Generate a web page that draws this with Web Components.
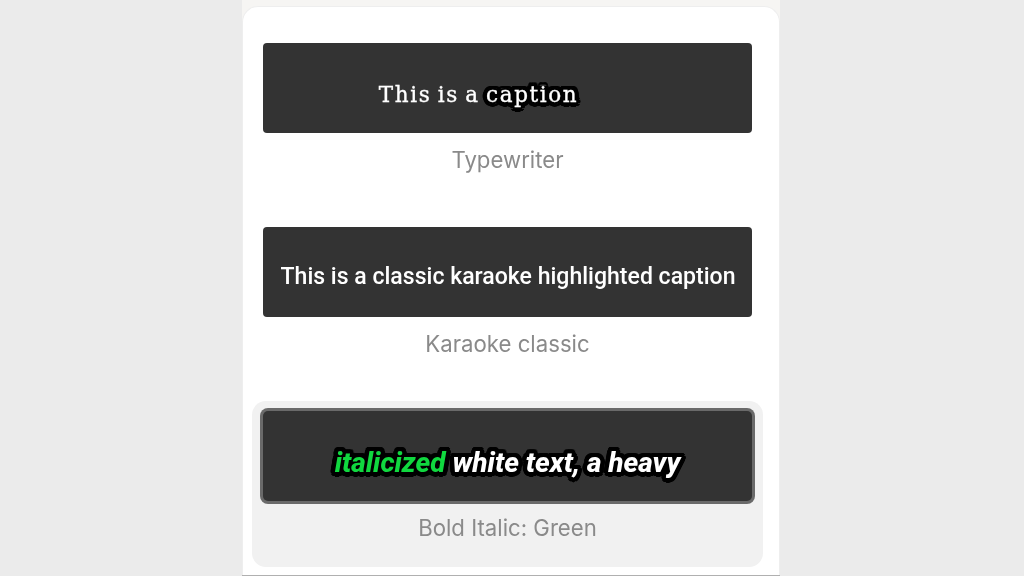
<!DOCTYPE html>
<html><head><meta charset="utf-8"><style>
html,body{margin:0;padding:0;height:100%}
body{background:#ebebeb;overflow:hidden;font-family:"Inter","Liberation Sans",sans-serif}
</style></head><body>
<caption-panel>
  <caption-card label="Typewriter" variant="typewriter">This is a <outlined-word>caption</outlined-word></caption-card>
  <caption-card label="Karaoke classic" variant="karaoke">This is a classic karaoke highlighted caption</caption-card>
  <caption-card label="Bold Italic: Green" variant="bold" selected><span style="color:#10d83f">italicized</span> white text, a heavy</caption-card>
</caption-panel>
<script>
const ring=(r,n)=>Array.from({length:n},(_,i)=>{const a=i/n*2*Math.PI;return `${(r*Math.cos(a)).toFixed(2)}px ${(r*Math.sin(a)).toFixed(2)}px .6px #000`}).join(',');
class OutlinedWord extends HTMLElement{
  constructor(){super();this.attachShadow({mode:'open'}).innerHTML=`<style>
  :host{display:inline;text-shadow:${ring(4.5,20)}}
  </style><slot></slot>`;}
}
class CaptionPanel extends HTMLElement{
  constructor(){super();this.attachShadow({mode:'open'}).innerHTML=`<style>
  :host{display:block;width:538px;height:576px;margin-left:242px;background:#f6f5f3;box-sizing:border-box;padding-top:6px;border-bottom:1px solid #b0b0b0}
  .in{height:100%;box-sizing:border-box;background:#fff;border:1px solid #eeeeee;border-bottom:0;border-radius:16px 16px 0 0;padding:26px 16px 0 9px;display:flex;flex-direction:column;gap:18px}
  </style><div class="in"><slot></slot></div>`;}
}
class CaptionCard extends HTMLElement{
  constructor(){super();const v=this.getAttribute('variant');this.attachShadow({mode:'open'}).innerHTML=`<style>
  :host{display:block;height:166px;box-sizing:border-box;padding:10px 11px 0;border-radius:14px;color:#fff}
  :host([selected]){background:#f1f1f1}
  .box{height:90px;box-sizing:border-box;background:#333;border-radius:4px;display:flex;justify-content:center;align-items:center}
  :host([selected]) .box{box-shadow:0 0 0 3px #6a6a6a;border-radius:5px}
  .t{white-space:nowrap;filter:blur(.35px)}
  .typewriter{font:400 21.5px "DejaVu Serif",serif;-webkit-text-stroke:.35px #fff;letter-spacing:1.6px;word-spacing:-2px;margin-left:-58px;margin-top:13px}
  .karaoke{font:500 23.05px Roboto,sans-serif;margin-top:9px;margin-left:1px}
  .bold{font:italic 800 28px Roboto,sans-serif;margin-top:12px;text-shadow:${ring(4.5,20)}}
  .l{margin-top:15px;text-align:center;font:400 22.2px/24px Inter,sans-serif;color:#8a8a8a;filter:blur(.35px)}
  </style><div class="box"><div class="t ${v}"><slot></slot></div></div><div class="l">${this.getAttribute('label')}</div>`;}
}
customElements.define('outlined-word',OutlinedWord);
customElements.define('caption-panel',CaptionPanel);
customElements.define('caption-card',CaptionCard);
</script></body></html>
